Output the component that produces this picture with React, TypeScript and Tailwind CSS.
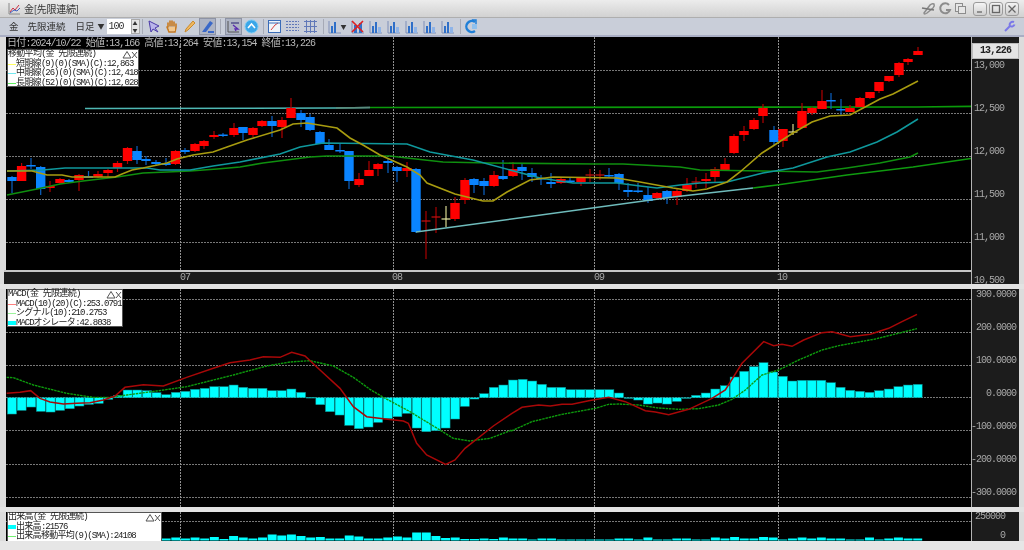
import type { ReactNode } from "react";

const mono = "font-[family-name:'Liberation_Mono','Noto_Sans_CJK_JP',monospace]";
const jp = "font-[family-name:'Noto_Sans_CJK_JP',sans-serif]";

// x, body top, body bottom, wick high, wick low, colour (r red, b blue, d dark doji, p pale doji, u blue doji)
type Candle = [number, number, number, number, number, string];
const candles: Candle[] = [
  [12, 177, 181, 176, 193, "b"], [21.6, 166, 181, 163, 181, "r"], [31, 165, 166, 158, 169, "u"], [40.7, 167, 189, 166, 195, "b"],
  [50, 186, 188, 181, 192, "r"], [60, 179, 183, 178, 184, "r"], [69, 180, 182, 179, 183, "u"], [79, 175, 180, 174, 191, "r"],
  [88.5, 176, 178, 171, 178, "b"], [98, 174, 177, 171, 178, "r"], [108, 170, 173, 169, 177, "r"], [117.5, 163, 168, 161, 172, "r"],
  [127.5, 148, 161, 147, 164, "r"], [137, 151, 160, 146, 164, "b"], [146, 159, 161, 156, 165, "b"], [156, 162, 164, 160, 166, "b"],
  [166, 163, 165, 158, 166, "b"], [175.5, 151, 164, 150, 165, "r"], [185, 150, 152, 148, 154, "u"], [195, 144, 151, 143, 152, "r"],
  [204, 141, 146, 140, 149, "r"], [214, 135, 137, 131, 139, "r"], [223, 134.5, 136, 133, 137, "u"], [234, 128, 135, 123, 137, "r"],
  [243, 127, 133, 127, 140, "b"], [253, 128, 135, 127, 137, "r"], [262, 121, 126, 120, 127, "r"], [272, 121, 126, 116, 137, "b"],
  [282, 120, 127, 117, 138, "r"], [291, 108, 118, 98, 118, "r"], [301, 113, 120, 110, 127, "b"], [310, 117, 130, 114, 131, "b"],
  [320, 132, 144, 131, 144, "b"], [329, 145, 150, 139, 150, "b"], [340, 150, 151, 144, 153, "u"], [349, 151, 181, 151, 189, "b"],
  [359, 179, 185, 173, 187, "r"], [369, 170, 176, 161, 176, "r"], [378, 164, 169, 163, 176, "r"], [388, 161, 163, 159, 173, "u"],
  [397, 167, 171, 166, 182, "b"], [407, 168, 171, 162, 177, "r"], [416, 169, 232, 168, 233, "b"], [426, 221, 221, 211, 259, "d"],
  [436, 217, 217, 207, 233, "d"], [446, 219, 219, 206, 227, "p"], [455, 203, 219, 197, 221, "r"], [465, 180, 200, 178, 204, "r"],
  [474, 179, 185, 178, 193, "b"], [484, 181, 186, 178, 195, "b"], [494, 175, 186, 171, 187, "r"], [503, 176, 179, 160, 180, "b"],
  [513, 169, 176, 162, 177, "r"], [522, 167, 171, 164, 180, "b"], [532, 173, 177, 168, 182, "b"], [541, 178, 179, 175, 185, "u"],
  [551, 182, 184, 173, 188, "b"], [561, 179, 183, 178, 184, "r"], [570, 180.5, 181.5, 177, 183, "u"], [581, 178, 182, 178, 186, "r"],
  [590, 175, 175, 169, 182, "d"], [600, 175, 175, 170, 180, "d"], [609, 175, 175, 168, 177, "u"], [619, 174, 183, 173, 190, "b"],
  [628, 190, 192, 183, 197, "u"], [638, 190.5, 190.5, 183, 193, "u"], [648, 195, 201, 187, 203, "b"], [657, 193, 198, 192, 200, "r"],
  [667, 191, 198, 190, 204, "b"], [677, 191, 197, 189, 205, "r"], [687, 185, 191, 178, 192, "r"], [696, 182, 182, 177, 188, "d"],
  [706, 179, 181, 173, 188, "r"], [715, 169, 177, 167, 182, "r"], [725, 164, 170, 158, 171, "r"], [734, 136, 153, 134, 154, "r"],
  [744, 131, 135, 126, 141, "r"], [754, 120, 129, 118, 130, "r"], [763, 108, 116, 104, 123, "r"], [774, 130, 142, 126, 145, "b"],
  [783, 129, 141, 129, 147, "r"], [793, 132, 132, 124, 135, "p"], [802, 111, 128, 103, 128, "r"], [812, 108, 113, 107, 115, "r"],
  [822, 101, 109, 90, 109, "r"], [831, 100, 100, 93, 109, "u"], [841, 109, 109, 99, 116, "u"], [850, 108, 112, 105, 112, "r"],
  [860, 98, 107, 97, 107, "r"], [870, 92, 98, 92, 99, "r"], [879, 82, 91, 82, 93, "r"], [889, 76, 81, 76, 82, "r"],
  [899, 63, 75, 62, 77, "r"], [908, 59, 62, 58, 65, "r"], [918, 51, 55, 47, 55, "r"],
];

const shortMa = "7,171 32,171 47,175 62,175 72,177 115,177 122,174 132,170 143,168 167,163 177,159 193,155 213,152 227,147 247,140 280,130 293,124 307,123 337,128 350,138 363,145 380,155 407,167 420,175 427,183 455,194 483,201 493,201 507,192 530,180 553,177 617,178 640,182 673,188 693,191 707,189 727,182 740,172 762,153 773,146 793,133 812,122 830,116 850,115 867,106 880,99 893,94 918,81";
const midMa = "7,171 43,170 65,168 147,168 160,170 190,170 213,166 240,162 280,154 300,147 323,143 407,144 430,152 473,160 540,178 573,183 617,183 640,186 657,188 680,185 700,183 727,182 763,173 793,168 827,157 850,152 877,142 897,132 918,119";
const longMa = "7,195 17,193 37,189 60,184 83,181 117,177 143,173 167,172 190,171 217,169 240,167 263,163 310,157 327,156 390,156 407,158 443,162 490,163 595,164 623,164 680,167 700,170 763,171 817,172 847,168 880,163 910,157 918,153";

const macdRaw = [222, 211, 201, 214, 216, 211, 206, 198, 193, 190, 178, 166, 150, 150, 152, 158, 164, 157, 154, 148, 145, 140, 140, 135, 142, 145, 145, 152, 152, 147, 157, 172, 194, 215, 225, 256, 266, 261, 247, 236, 230, 220, 264, 275, 272, 264, 237, 199, 177, 161, 142, 135];
const macdRaw2 = [300, 298, 303, 313, 322, 322, 329, 329, 329, 329, 329, 339, 353, 360, 372, 369, 372, 364, 354, 346, 339, 327, 317, 291, 274, 260, 248, 276, 289, 303, 301, 301, 301, 308, 322, 331, 334, 337, 332, 327, 320, 315, 313];
const macdHeights = [...macdRaw.map((y) => (173 - y) / 3), ...macdRaw2.map((y) => (353 - y) / 3)];

const z6 = (s: string) => s.split(" ").map((p) => { const [a, b] = p.split(","); return `${+a / 3},${340 + +b / 3}`; }).join(" ");
const z7 = (s: string) => s.split(" ").map((p) => { const [a, b] = p.split(","); return `${512 + +a / 3},${280 + +b / 3}`; }).join(" ");
const macdLine = z6("20,160 60,157 92,152 120,175 150,186 190,192 230,190 270,188 310,180 345,168 375,142 430,134 490,138 560,112 640,85 690,68 750,60 790,50 840,52 875,37 915,48 960,90 1020,145 1060,200 1100,230 1150,236 1210,243 1225,250 1250,310 1280,345 1337,373 1365,360 1395,325 1480,258 1536,220") + " " + z7("0,400 30,382 80,375 115,378 150,373 180,373 230,362 290,352 340,365 400,392 430,396 470,404 530,388 600,355 640,330 690,250 755,185 785,197 810,193 840,199 875,180 930,158 960,155 1015,170 1075,163 1130,145 1170,125 1215,103");
const signalLine = z6("20,112 40,113 100,135 200,160 280,172 330,172 380,165 470,153 560,140 700,105 800,78 870,66 930,62 1000,78 1060,112 1110,148 1150,172 1230,215 1300,258 1360,295 1410,303 1470,295 1536,270") + " " + z7("0,452 60,425 150,403 250,385 290,373 320,372 380,375 440,384 500,388 560,386 620,375 660,358 700,330 750,285 800,270 860,240 930,210 980,197 1090,177 1215,146");

const volumes = [0, 0, 0, 0, 0, 0, 0, 0, 0, 0, 0, 0, 0, 0, 0, 0, 2, 3, 2, 3, 2, 3.5, 1.5, 4.5, 3, 2, 3, 6, 5, 6, 4.5, 3, 3.5, 2, 2, 5, 4, 2, 2, 3, 4, 3, 8, 8, 4.5, 2.5, 3, 1.5, 1.5, 2, 1.5, 3, 2, 2, 1, 2, 2, 1, 1, 1, 1, 1, 1, 2, 2, 1, 3, 1, 1, 2, 2, 1, 1, 3, 2, 3.5, 2, 2, 3.5, 3, 1, 2, 3, 2, 3, 2, 2, 1, 1, 3, 1, 2, 3, 2, 2];

const barX = (i: number) => 12 + 9.635 * i;

// half-width latin and full-width kana/kanji need different tracking, as in the bitmap font
function Mixed({ text }: { text: string }) {
  return (
    <>
      {text.split(/([\u3000-\u9fff]+)/).map((part, i) => (
        <span key={i} className={i % 2 ? "tracking-[-0.7px]" : "tracking-[-1px]"}>{part}</span>
      ))}
    </>
  );
}

function Grid({ xs, ys, x0, x1, y0, y1 }: { xs: number[]; ys: number[]; x0: number; x1: number; y0: number; y1: number }) {
  return (
    <g stroke="#787878" strokeWidth="1" strokeDasharray="2 1">
      {ys.map((y) => <line key={y} x1={x0} x2={x1} y1={y + 0.5} y2={y + 0.5} />)}
      {xs.map((x) => <line key={x} x1={x + 0.5} x2={x + 0.5} y1={y0} y2={y1} stroke="#909090" />)}
    </g>
  );
}

function CandleMark({ c }: { c: Candle }) {
  const [x, top, bot, hi, lo, k] = c;
  const wick = k === "r" ? "#b30000" : k === "d" ? "#a80000" : k === "p" ? "#d8d890" : "#0b62c4";
  const fill = k === "r" ? "#ff0000" : k === "d" ? "#c81010" : k === "p" ? "#e6e6a0" : "#0a84ff";
  return (
    <g>
      <line x1={x} x2={x} y1={hi} y2={lo} stroke={wick} strokeWidth="1.2" />
      {k === "d" || k === "p" ? (
        <line x1={x - 4.5} x2={x + 4.5} y1={top} y2={top} stroke={fill} strokeWidth="1.2" />
      ) : (
        <rect x={x - 4.7} y={top} width="9.4" height={Math.max(bot - top, 1.5)} fill={fill} />
      )}
    </g>
  );
}

function Legend({ title, rows, className }: { title: string; rows: { label: string; color: string; block?: boolean; dash?: boolean }[]; className: string }) {
  return (
    <div className={`absolute left-px border border-[#555] bg-white text-[9px] leading-[9.5px] text-[#222] ${mono} ${className}`}>
      <div className="relative h-[9.5px] whitespace-nowrap">
        <Mixed text={title} />
        <svg className="absolute right-0 top-0" width="16" height="9" viewBox="0 0 16 9" fill="none" stroke="#555">
          <path d="M1 8 L5 1.5 L9 8 Z" />
          <path d="M10 2 L15 8 M15 2 L10 8" />
        </svg>
      </div>
      {rows.map((r) => (
        <div key={r.label} className="flex h-[9.5px] items-center whitespace-nowrap">
          <span className="w-[8px] shrink-0" style={{ height: r.block ? 4 : 1, background: r.color, opacity: r.dash ? 0.7 : 1 }} />
          <span><Mixed text={r.label} /></span>
        </div>
      ))}
    </div>
  );
}

function AxisLabel({ y, children, right }: { y: number; children: ReactNode; right?: number }) {
  return (
    <span
      className={`absolute whitespace-nowrap text-[10px] leading-[10px] tracking-[-1px] text-[#a8a8a8] ${mono}`}
      style={right === undefined ? { top: y - 4, left: 2 } : { top: y - 4, right }}
    >
      {children}
    </span>
  );
}

function Btn({ children, pressed }: { children: ReactNode; pressed?: boolean }) {
  return (
    <span className={`flex h-[17px] w-[17px] shrink-0 items-center justify-center ${pressed ? "border border-[#8d93a5] bg-[#aeb4c4]" : ""}`}>
      <svg width="15" height="15" viewBox="0 0 15 15" fill="none">{children}</svg>
    </span>
  );
}

const Sep = () => <span className="mx-[2px] h-[15px] w-px shrink-0 bg-[#a6aab6]" />;

function BarsIcon({ n }: { n?: string }) {
  return (
    <Btn>
      <path d="M2 14 H14 M2 14 V2" stroke="#7f8fb8" />
      <rect x="4" y="7" width="2" height="7" fill="#2f6fc8" />
      <rect x="7" y="3" width="2" height="11" fill="#2f6fc8" />
      {n && <rect x="10" y="8" width="3" height="6" fill="#8fb4e8" />}
    </Btn>
  );
}

export default function App() {
  return (
    <div className={`flex h-[550px] w-[1024px] flex-col overflow-hidden bg-[#dcdcdc] blur-[0.35px] ${jp}`}>
      {/* title bar */}
      <div className="flex h-[18px] shrink-0 items-center border-b border-[#aeaeae] bg-gradient-to-b from-[#ececec] to-[#d2d2d2] pl-[8px] pr-[5px]">
        <svg width="13" height="13" viewBox="0 0 13 13" fill="none">
          <path d="M1 1 V12 H12" stroke="#8a8a8a" />
          <path d="M2 10 L5 6 L7 8 L11 3" stroke="#d03040" />
          <path d="M2 11 L6 8 L9 9 L12 6" stroke="#4060c0" />
        </svg>
        <span className="ml-[3px] text-[10px] leading-none tracking-[-0.3px] text-[#333]">金[先限連続]</span>
        <span className="flex-1" />
        <svg width="15" height="13" viewBox="0 0 15 13" fill="none" stroke="#8c8c8c" strokeWidth="1.5">
          <path d="M3 11 L9 3 Q11 1 13 2 Q14 4 12 6 L6 11 Q3 13 3 11 Z" />
          <path d="M1 6 L13 8" stroke="#777" />
        </svg>
        <svg className="ml-[2px]" width="15" height="13" viewBox="0 0 15 13" fill="none" stroke="#8c8c8c" strokeWidth="2">
          <path d="M11 3 A5 5 0 1 0 12 8 H8" />
        </svg>
        <svg className="ml-px" width="13" height="13" viewBox="0 0 13 13" fill="#e6e6e6" stroke="#8c8c8c">
          <rect x="1.5" y="1.5" width="7" height="8" />
          <rect x="4.5" y="4.5" width="7" height="7" />
        </svg>
        <span className="w-[4px]" />
        {["min", "max", "close"].map((b) => (
          <span key={b} className="ml-[2px] flex h-[14px] w-[14px] items-center justify-center rounded-[3px] border border-[#9a9a9a] bg-gradient-to-b from-[#f4f4f4] to-[#cfcfcf]">
            <svg width="10" height="10" viewBox="0 0 10 10" fill="none" stroke="#666" strokeWidth="1.3">
              {b === "min" && <path d="M2 8 H7" />}
              {b === "max" && <rect x="1.5" y="1.5" width="7" height="7" />}
              {b === "close" && <path d="M1.5 1.5 L8.5 8.5 M8.5 1.5 L1.5 8.5" />}
            </svg>
          </span>
        ))}
      </div>

      {/* toolbar */}
      <div className="flex h-[19px] shrink-0 items-center border-b-2 border-[#a9aec4] bg-[#c9ced9] pl-[9px] pr-[8px] text-[9.5px] leading-none text-[#333]">
        <span>金</span>
        <span className="ml-[9px]">先限連続</span>
        <span className="ml-[10px]">日足</span>
        <span className="ml-[3px] text-[7px]">▼</span>
        <span className={`ml-[2px] flex h-[15px] w-[24px] items-center bg-white pl-[2px] text-[10px] tracking-[-1px] ${mono}`}>100</span>
        <span className="flex h-[15px] w-[9px] flex-col items-center justify-center gap-px border border-[#aaa] bg-[#e4e4e4] text-[5px] leading-[6px]">
          <span>▲</span><span>▼</span>
        </span>
        <Sep />
        <Btn><path d="M3 2 L13 7 L9 9 L12 13 L7 10 L5 13 Z" fill="#b9b5ea" stroke="#4a3aa8" /></Btn>
        <span className="w-px" />
        <Btn><path d="M4 8 V4 M6 7 V2 M8 7 V2 M10 7 V3 M12 8 V5 M3 8 L5 13 H11 L12 8" stroke="#c87a20" strokeWidth="1.6" strokeLinecap="round" /><path d="M5 8 H11 V12 H5 Z" fill="#f3c78c" /></Btn>
        <span className="w-px" />
        <Btn><path d="M3 13 L4 10 L11 2 L13 4 L6 11 Z" fill="#f0b860" stroke="#c88a30" /></Btn>
        <span className="w-px" />
        <Btn pressed><path d="M2 13 L10 2 L13 4 L6 13 Z" fill="#3a68c8" /><path d="M8 13 H14" stroke="#3a68c8" strokeWidth="2" /></Btn>
        <span className="w-[2px]" />
        <Sep />
        <span className="w-[2px]" />
        <Btn pressed><path d="M2 2 V13 H13" stroke="#555" /><path d="M5 3 H13 V5 H5 Z" fill="#6a6a9a" /><path d="M7 6 L12 10 L9 10 L10 12" stroke="#5a2ab0" strokeWidth="1.3" /></Btn>
        <span className="w-px" />
        <Btn><circle cx="7.5" cy="7.5" r="6.5" fill="#3ba6e8" stroke="#7ccaf2" /><path d="M4 9 L7.5 5 L11 9" stroke="#fff" strokeWidth="1.6" /></Btn>
        <span className="w-px" />
        <Sep />
        <Btn><rect x="1.5" y="1.5" width="12" height="12" fill="#f0f4fa" stroke="#3a6cb8" /><path d="M4 11 L8 6 L11 4" stroke="#d84040" /><path d="M1.5 4 H13.5" stroke="#3a6cb8" /></Btn>
        <span className="w-px" />
        <Btn><path d="M1 2.5 H14 M1 5.5 H14 M1 8.5 H14 M1 11.5 H14" stroke="#6078b8" strokeDasharray="2 1" /></Btn>
        <span className="w-px" />
        <Btn><path d="M1 2.5 H14 M1 7.5 H14 M1 12.5 H14 M3.5 1 V14 M7.5 1 V14 M11.5 1 V14" stroke="#6078b8" /></Btn>
        <span className="w-[2px]" />
        <Sep />
        <BarsIcon />
        <span className="-ml-[2px] text-[6px]">▼</span>
        <span className="w-[2px]" />
        <Btn><path d="M2 14 H14 M2 14 V2" stroke="#7f8fb8" /><rect x="4" y="6" width="3" height="8" fill="#2f6fc8" /><rect x="9" y="4" width="3" height="10" fill="#2f6fc8" /><path d="M2 2 L13 13 M13 2 L2 13" stroke="#e02020" strokeWidth="1.6" /></Btn>
        <span className="w-px" />
        <BarsIcon n="1" />
        <span className="w-px" />
        <BarsIcon n="2" />
        <span className="w-px" />
        <BarsIcon n="3" />
        <span className="w-px" />
        <BarsIcon n="4" />
        <span className="w-px" />
        <BarsIcon n="5" />
        <span className="w-[2px]" />
        <Sep />
        <Btn><path d="M11 3 A5.5 5.5 0 1 0 11 12" stroke="#1f7fd8" strokeWidth="2.4" /><path d="M8 1 H12 V5" stroke="#1f7fd8" strokeWidth="1.5" /><rect x="8" y="5" width="5" height="5" fill="#8fc0ee" /></Btn>
        <span className="flex-1" />
        <svg width="13" height="13" viewBox="0 0 13 13" fill="none" stroke="#7a78e8" strokeWidth="2">
          <path d="M2 11 L7 6" />
          <path d="M7 6 A3 3 0 0 1 11 2 M7 6 A3 3 0 0 0 11.5 4.5" />
        </svg>
      </div>

      {/* price pane with time bar */}
      <div className="flex h-[247px] shrink-0 pl-[6px] pr-[5px]">
        <div className="flex w-[965px] shrink-0 flex-col">
          <div className="relative h-[233px] bg-black">
            <svg className="block" width="965" height="233" viewBox="6 37 965 233">
              <Grid xs={[180, 393, 594, 778]} ys={[70, 113, 156, 199, 242]} x0={6} x1={971} y0={37} y1={270} />
              <polyline points="85,108.5 336,108 370,107.5" fill="none" stroke="#4fb8b4" strokeWidth="1.5" />
              <polyline points="336,108 370,107.5" fill="none" stroke="#5c8c7c" strokeWidth="1.5" />
              <polyline points="370,107.5 917,107 971,106.3" fill="none" stroke="#0a9a0a" strokeWidth="1.7" />
              {candles.map((c) => <CandleMark key={c[0]} c={c} />)}
              <polyline points="416,232 673,197 753,188" fill="none" stroke="#6fbcbc" strokeWidth="1.5" />
              <polyline points="753,188 777,185 847,175 913,167 971,158.5" fill="none" stroke="#0f9a0f" strokeWidth="1.5" />
              <polyline points={longMa} fill="none" stroke="#0f8f0f" strokeWidth="1.6" />
              <polyline points={midMa} fill="none" stroke="#0f989c" strokeWidth="1.6" />
              <polyline points={shortMa} fill="none" stroke="#a89c10" strokeWidth="1.6" />
            </svg>
            <p className={`absolute left-px top-px whitespace-nowrap text-[10px] leading-[12px] text-[#b8b8b8] ${mono}`}>
              <Mixed text="日付:2024/10/22 始値:13,166 高値:13,264 安値:13,154 終値:13,226" />
            </p>
            <Legend
              className="top-[12px] h-[38px] w-[132px]"
              title="移動平均(金 先限連続)"
              rows={[
                { label: "短期線(9)(0)(SMA)(C):12,863", color: "#ffff60" },
                { label: "中期線(26)(0)(SMA)(C):12,418", color: "#70e8f0" },
                { label: "長期線(52)(0)(SMA)(C):12,028", color: "#60f060" },
              ]}
            />
          </div>
          <div className="relative -ml-[2px] h-[14px] border-t-2 border-[#c8c8c8] bg-[#1c1c1c]">
            {[["07", 176], ["08", 388], ["09", 590], ["10", 773]].map(([t, x]) => (
              <span key={t} className={`absolute top-0 text-[10px] leading-[11px] tracking-[-1px] text-[#a8a8a8] ${mono}`} style={{ left: x }}>{t}</span>
            ))}
          </div>
        </div>
        <div className="relative w-[48px] shrink-0 overflow-hidden border-l border-[#b4b4b4] bg-[#1c1c1c]">
          <div className={`absolute left-0 right-0 top-[6px] flex h-[16px] items-center justify-center border border-[#bbb] bg-[#e4e4e4] text-[10px] font-bold leading-none tracking-[-0.8px] text-[#222] ${mono}`}>13,226</div>
          {[["13,000", 28], ["12,500", 71], ["12,000", 114], ["11,500", 157], ["11,000", 200], ["10,500", 243]].map(([t, y]) => (
            <AxisLabel key={t} y={y as number}>{t}</AxisLabel>
          ))}
        </div>
      </div>

      <div className="h-[5px] shrink-0 bg-[#e2e2e2]" />

      {/* MACD pane */}
      <div className="flex h-[218px] shrink-0 pl-[6px] pr-[5px]">
        <div className="relative w-[965px] shrink-0 bg-black">
          <svg className="block" width="965" height="218" viewBox="6 289 965 218">
            <Grid xs={[180, 393, 594, 778]} ys={[299, 332, 365, 397, 430, 464, 497]} x0={6} x1={971} y0={289} y1={507} />
            {macdHeights.map((h, i) => (
              <rect
                key={i}
                x={barX(i) - 4.5}
                y={h >= 0 ? 397.7 - h : 397.7}
                width="9"
                height={Math.max(Math.abs(h), 0.7)}
                fill="#00ffff"
                stroke="#0a8a8a"
                strokeWidth="0.5"
              />
            ))}
            <polyline points={signalLine} fill="none" stroke="#0d9a0d" strokeWidth="1.4" strokeDasharray="2.5 0.8" />
            <polyline points={macdLine} fill="none" stroke="#a80808" strokeWidth="1.5" />
          </svg>
          <Legend
            className="top-0 h-[38px] w-[116px]"
            title="MACD(金 先限連続)"
            rows={[
              { label: "MACD(10)(20)(C):253.0791", color: "#ff8080" },
              { label: "シグナル(10):210.2753", color: "#70f070", dash: true },
              { label: "MACDオシレータ:42.8038", color: "#00ffff", block: true },
            ]}
          />
        </div>
        <div className="relative w-[48px] shrink-0 border-l border-[#b4b4b4] bg-[#1c1c1c]">
          {[["300.0000", 5], ["200.0000", 38], ["100.0000", 71], ["0.0000", 104], ["-100.0000", 137], ["-200.0000", 170], ["-300.0000", 203]].map(([t, y]) => (
            <AxisLabel key={t} y={y as number} right={3}>{t}</AxisLabel>
          ))}
        </div>
      </div>

      <div className="h-[5px] shrink-0 bg-[#e2e2e2]" />

      {/* volume pane */}
      <div className="flex h-[29px] shrink-0 pl-[6px] pr-[5px]">
        <div className="relative w-[965px] shrink-0 overflow-hidden bg-black">
          <svg className="block" width="965" height="29" viewBox="6 512 965 29">
            <Grid xs={[180, 393, 594, 778]} ys={[521]} x0={6} x1={971} y0={512} y1={541} />
            {volumes.map((h, i) => (
              <rect key={i} x={barX(i) - 4.5} y={540.5 - h} width="9" height={h} fill="#00ffff" />
            ))}
          </svg>
          <Legend
            className="top-0 h-[30px] w-[155px]"
            title="出来高(金 先限連続)"
            rows={[
              { label: "出来高:21576", color: "#00ffff", block: true },
              { label: "出来高移動平均(9)(SMA):24108", color: "#70f070" },
            ]}
          />
        </div>
        <div className="relative w-[48px] shrink-0 border-l border-[#b4b4b4] bg-[#1c1c1c]">
          <AxisLabel y={4} right={14}>250000</AxisLabel>
          <AxisLabel y={23} right={14}>0</AxisLabel>
        </div>
      </div>

      <div className="flex-1 bg-[#e6e6e6]" />
    </div>
  );
}
